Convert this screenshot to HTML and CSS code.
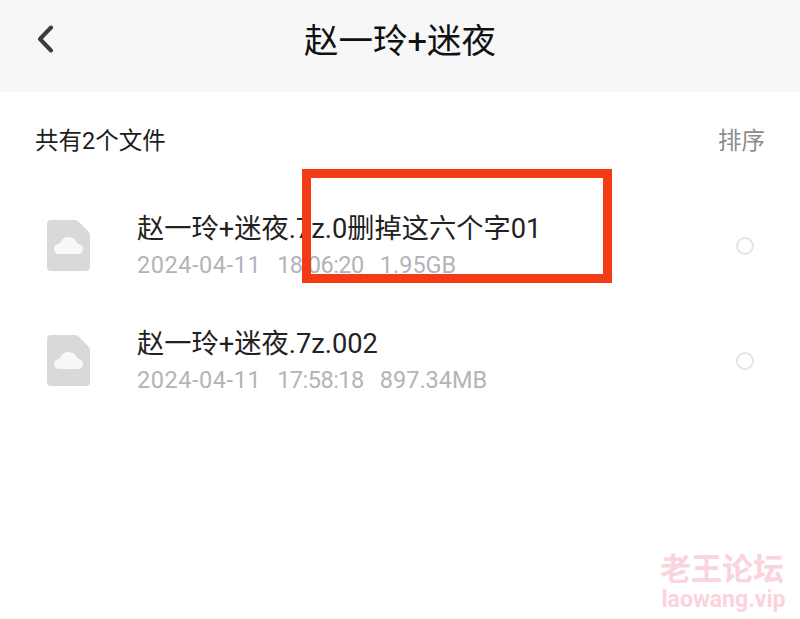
FILE: index.html
```html
<!DOCTYPE html>
<html lang="zh-CN">
<head>
    <meta charset="UTF-8">
    <meta name="viewport" content="width=device-width, initial-scale=1.0">
    <title>赵一玲+迷夜</title>
    <link rel="stylesheet" href="styles.css">
</head>
<body>
    <header class="topbar">
        <svg class="back" width="18" height="28" viewBox="0 0 18 28"><path d="M15 2.5 L4 14 L15 25.500" fill="none" stroke="#3c3c3c" stroke-width="4" stroke-linecap="round" stroke-linejoin="round"/></svg>
        <h1>赵一玲+迷夜</h1>
    </header>
    <div class="summary">
        <span class="count">共有2个文件</span>
        <span class="sort">排序</span>
    </div>
    <ul class="files">
        <li class="file">
            <svg class="file-icon" width="43" height="51" viewBox="0 0 43 51">
                <path d="M4 0 H28 Q30 0 32 2 L41 11 Q43 13 43 15 V47 a4 4 0 0 1 -4 4 H4 a4 4 0 0 1 -4 -4 V4 a4 4 0 0 1 4 -4 Z" fill="#d9d9dc"/>
                <path d="M12.500 34 a5 5 0 0 1 -1 -10 a3 3 0 0 1 1.500 -1 a9 9 0 0 1 17 0 a3 3 0 0 1 1.500 1 a5 5 0 0 1 -1 10 Z" fill="#f8f8f9"/>
            </svg>
            <div class="file-info">
                <div class="file-name">赵一玲+迷夜.7z.0删掉这六个字01</div>
                <div class="file-meta"><span class="date">2024-04-11</span><span class="time">18:06:20</span><span>1.95GB</span></div>
            </div>
            <span class="radio"></span>
        </li>
        <li class="file">
            <svg class="file-icon" width="43" height="51" viewBox="0 0 43 51">
                <path d="M4 0 H28 Q30 0 32 2 L41 11 Q43 13 43 15 V47 a4 4 0 0 1 -4 4 H4 a4 4 0 0 1 -4 -4 V4 a4 4 0 0 1 4 -4 Z" fill="#d9d9dc"/>
                <path d="M12.500 34 a5 5 0 0 1 -1 -10 a3 3 0 0 1 1.500 -1 a9 9 0 0 1 17 0 a3 3 0 0 1 1.500 1 a5 5 0 0 1 -1 10 Z" fill="#f8f8f9"/>
            </svg>
            <div class="file-info">
                <div class="file-name">赵一玲+迷夜.7z.002</div>
                <div class="file-meta"><span class="date">2024-04-11</span><span class="time">17:58:18</span><span>897.34MB</span></div>
            </div>
            <span class="radio"></span>
        </li>
    </ul>
    <div class="redbox"></div>
    <div class="watermark">
        <div class="wm-title">老王论坛</div>
        <div class="wm-url">laowang.vip</div>
    </div>
</body>
</html>
```

FILE: styles.css
```css
html, body {
    height: 100%;
}
body {
    position: relative;
    margin: 0;
    background: #fff;
    overflow: hidden;
    font-family: Roboto, "Noto Sans CJK SC", sans-serif;
    color: #1c1c1c;
}
.topbar {
    position: relative;
    height: 92px;
    background: #f7f7f7;
    display: flex;
    align-items: center;
    justify-content: center;
}
.topbar h1 {
    margin: 0 0 17px;
    font-size: 34.500px;
    font-weight: 400;
    color: #111;
}
.back {
    position: absolute;
    left: 36px;
    top: 25px;
}
.summary {
    display: flex;
    justify-content: space-between;
    align-items: center;
    padding: 33px 35px 0 35px;
    font-size: 23.500px;
    line-height: 32px;
}
.sort {
    color: #8c8c8c;
}
.files {
    list-style: none;
    margin: 0;
    padding: 0;
    margin-top: 31px;
}
.file {
    display: flex;
    align-items: center;
    height: 115px;
    padding: 0 46px 0 47px;
}
.file-icon {
    flex: none;
}
.file-info {
    flex: 1;
    margin-left: 47px;
}
.file-name {
    font-size: 27.250px;
    line-height: 36px;
    color: #222;
}
.file-meta {
    display: flex;
    gap: 16px;
    padding-top: 3px;
    font-size: 23.500px;
    line-height: 30px;
    color: #b4b4b8;
}
.date {
    letter-spacing: 0.55px;
}
.time {
    letter-spacing: -0.5px;
}
.radio {
    width: 14px;
    height: 14px;
    border: 2px solid #e4e4e4;
    border-radius: 50%;
}
.redbox {
    position: absolute;
    left: 302px;
    top: 169px;
    width: 292px;
    height: 96px;
    border: 9px solid #f33c15;
}
.watermark {
    position: absolute;
    right: 16px;
    top: 552px;
    text-align: center;
    color: #fbd3dc;
}
.wm-title {
    font-size: 31px;
    line-height: 36px;
    font-weight: 700;
}
.wm-url {
    margin-right: -3px;
    font-size: 23px;
    line-height: 24px;
    font-weight: 700;
}
```
